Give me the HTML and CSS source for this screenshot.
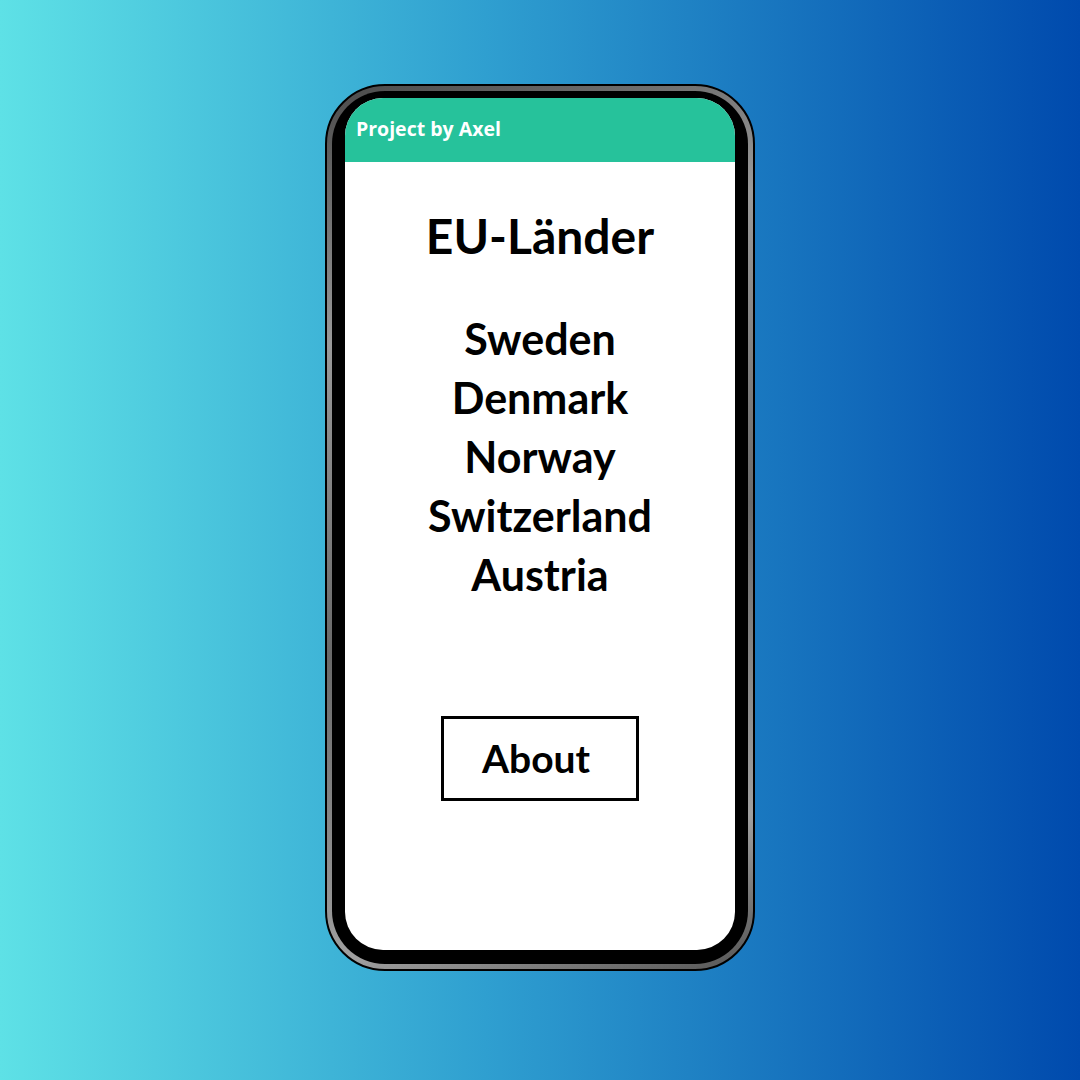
FILE: index.html
```html
<!DOCTYPE html>
<html lang="de">
<head>
<meta charset="utf-8">
<title>EU-Länder</title>
<link rel="stylesheet" href="styles.css">
</head>
<body>
<main class="stage">
  <div class="phone">
    <div class="bezel">
      <div class="screen">
        <header class="appbar">Project by Axel</header>
        <section class="content">
          <h1 class="title">EU-Länder</h1>
          <ul class="countries">
            <li>Sweden</li>
            <li>Denmark</li>
            <li>Norway</li>
            <li>Switzerland</li>
            <li>Austria</li>
          </ul>
          <button class="about">About</button>
        </section>
      </div>
    </div>
  </div>
</main>
</body>
</html>
```
FILE: styles.css
```css
* { box-sizing: border-box; }
html, body { margin: 0; padding: 0; }
body {
  width: 1080px;
  height: 1080px;
  overflow: hidden;
}
.stage {
  width: 1080px;
  height: 1080px;
  background: linear-gradient(90deg, #5ee1e6 0%, #2f9fd0 45%, #004aad 100%);
  display: flex;
  justify-content: center;
  padding-top: 84px;
}
.phone {
  width: 430px;
  height: 887px;
  border: 2px solid #000;
  border-radius: 60px;
  background: linear-gradient(160deg, #4a4a4a, #9a9a9a 25%, #6a6a6a 55%, #a0a0a0 85%, #555);
  padding: 5px;
}
.bezel {
  width: 100%;
  height: 100%;
  background: #000;
  border-radius: 53px;
  padding: 7px 13px 14px 13px;
}
.screen {
  width: 100%;
  height: 100%;
  background: #fff;
  border-radius: 38px;
  overflow: hidden;
  display: flex;
  flex-direction: column;
}
.appbar {
  height: 64px;
  background: #26c29b;
  color: #fff;
  font-family: "Open Sans", "Liberation Sans", sans-serif;
  font-weight: 700;
  font-size: 19.5px;
  line-height: 26px;
  padding: 18px 0 0 11px;
}
.content {
  display: flex;
  flex-direction: column;
  align-items: center;
  font-family: Lato, "Liberation Sans", sans-serif;
  font-weight: 700;
  color: #000;
}
.title {
  margin: 44px 0 0 0;
  font-size: 48px;
  line-height: 60px;
  font-weight: 700;
}
.countries {
  list-style: none;
  margin: 43px 0 0 0;
  padding: 0;
  text-align: center;
  font-size: 43px;
  line-height: 59px;
}
.about {
  margin-top: 112px;
  width: 198px;
  height: 85px;
  border: 3px solid #000;
  background: #fff;
  font-family: Lato, "Liberation Sans", sans-serif;
  font-weight: 700;
  font-size: 39px;
  color: #000;
  padding: 0 8px 2px 0;
}
```
